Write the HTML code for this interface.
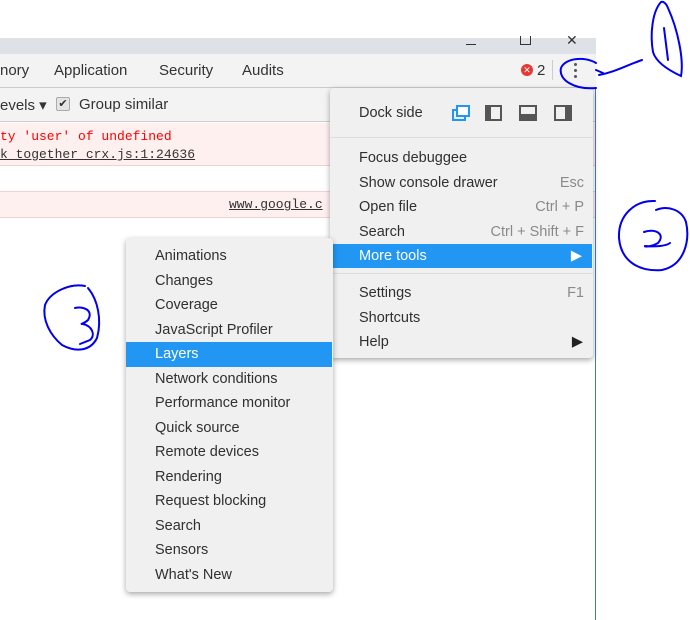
<!DOCTYPE html>
<html><head><style>
body{margin:0;width:690px;height:620px;background:#fff;position:relative;overflow:hidden;font-family:"Liberation Sans",sans-serif;font-size:14.5px;color:#303030}
.abs{position:absolute}
.menu{position:absolute;background:#f0f0f0;border-radius:4px;box-shadow:0 2px 6px rgba(0,0,0,.35)}
.it{position:absolute;left:0;right:0;height:24px;line-height:24px}
.it span.l{position:absolute}
.it span.r{position:absolute;color:#8a8a8a}
.hl{background:#2196f3;color:#fff}
.mono{font-family:"Liberation Mono",monospace;font-size:13px}
.tab{font-size:15px;color:#333}
</style></head><body>
<div class="abs" style="left:0;top:38px;width:596px;height:16px;background:#dee1e6"></div>
<div class="abs" style="left:466px;top:44px;width:10px;height:1px;background:#333"></div>
<div class="abs" style="left:520px;top:36px;width:9px;height:8px;border:1px solid #333;border-top:none"></div>
<div class="abs" style="left:566px;top:32px;font-size:14px;color:#333">✕</div>
<div class="abs" style="left:0;top:54px;width:596px;height:33px;background:#f3f3f3;border-bottom:1px solid #ccc"></div>
<div class="abs tab" style="left:0;top:62px">nory</div>
<div class="abs tab" style="left:54px;top:62px">Application</div>
<div class="abs tab" style="left:159px;top:62px">Security</div>
<div class="abs tab" style="left:242px;top:62px">Audits</div>
<div class="abs" style="left:521px;top:64px;width:12px;height:12px;border-radius:50%;background:#e53935;color:#fff;font-size:9px;line-height:12px;text-align:center">✕</div>
<div class="abs tab" style="left:537px;top:62px">2</div>
<div class="abs" style="left:552px;top:60px;width:1px;height:20px;background:#ccc"></div>
<div class="abs" style="left:574px;top:63px;width:3px;height:3px;border-radius:50%;background:#555;box-shadow:0 6px 0 #555,0 12px 0 #555"></div>
<div class="abs" style="left:0;top:88px;width:596px;height:33px;background:#f3f3f3;border-bottom:1px solid #ccc"></div>
<div class="abs tab" style="left:0;top:96px">evels ▾</div>
<div class="abs" style="left:56px;top:97px;width:12px;height:12px;border:1px solid #aaa;border-radius:2px;background:#e4e4e4;font-size:11px;line-height:12px;text-align:center">✔</div>
<div class="abs tab" style="left:79px;top:96px">Group similar</div>
<div class="abs" style="left:0;top:123px;width:596px;height:42px;background:#fff0f0;border-bottom:1px solid #f5d0d0"></div>
<div class="abs mono" style="left:0;top:129px;color:#f00">ty 'user' of undefined</div>
<div class="abs mono" style="left:0;top:147px;color:#333;text-decoration:underline">k_together_crx.js:1:24636</div>
<div class="abs" style="left:0;top:191px;width:596px;height:25px;background:#fff0f0;border-top:1px solid #f5d0d0;border-bottom:1px solid #f5d0d0"></div>
<div class="abs mono" style="left:229px;top:197px;color:#333;text-decoration:underline">www.google.c</div>
<div class="abs" style="left:595px;top:88px;width:1px;height:532px;background:#4a7bb7"></div>

<div class="menu" style="left:330px;top:88px;width:263px;height:270px">
 <div class="it" style="top:13px"><span class="l" style="left:29px">Dock side</span></div>
 <svg class="abs" style="left:120px;top:16px" width="130" height="20">
  <rect x="3" y="6" width="12" height="10" fill="none" stroke="#2196f3" stroke-width="2"/><rect x="7" y="2" width="12" height="10" fill="#fff" stroke="#2196f3" stroke-width="2"/>
  <rect x="36" y="2" width="15" height="14" fill="none" stroke="#555" stroke-width="2"/><rect x="36" y="2" width="5" height="14" fill="#555"/>
  <rect x="70" y="2" width="16" height="14" fill="none" stroke="#555" stroke-width="2"/><rect x="70" y="10" width="16" height="6" fill="#555"/>
  <rect x="105" y="2" width="16" height="14" fill="none" stroke="#555" stroke-width="2"/><rect x="115" y="2" width="6" height="14" fill="#555"/>
 </svg>
 <div class="abs" style="left:0;right:0;top:49px;height:1px;background:#ddd"></div>
 <div class="it" style="top:58px"><span class="l" style="left:29px">Focus debuggee</span></div>
 <div class="it" style="top:83px"><span class="l" style="left:29px">Show console drawer</span><span class="r" style="right:9px">Esc</span></div>
 <div class="it" style="top:107px"><span class="l" style="left:29px">Open file</span><span class="r" style="right:9px">Ctrl + P</span></div>
 <div class="it" style="top:132px"><span class="l" style="left:29px">Search</span><span class="r" style="right:9px">Ctrl + Shift + F</span></div>
 <div class="it hl" style="top:156px;right:1px"><span class="l" style="left:29px">More tools</span><span class="r" style="right:10px;color:#fff">▶</span></div>
 <div class="abs" style="left:0;right:0;top:185px;height:1px;background:#ddd"></div>
 <div class="it" style="top:193px"><span class="l" style="left:29px">Settings</span><span class="r" style="right:9px">F1</span></div>
 <div class="it" style="top:218px"><span class="l" style="left:29px">Shortcuts</span></div>
 <div class="it" style="top:242px"><span class="l" style="left:29px">Help</span><span class="r" style="right:10px;color:#222">▶</span></div>
</div>

<div class="menu" style="left:126px;top:238px;width:207px;height:354px">
 <div class="it" style="top:6px"><span class="l" style="left:29px">Animations</span></div>
 <div class="it" style="top:31px"><span class="l" style="left:29px">Changes</span></div>
 <div class="it" style="top:55px"><span class="l" style="left:29px">Coverage</span></div>
 <div class="it" style="top:80px"><span class="l" style="left:29px">JavaScript Profiler</span></div>
 <div class="it hl" style="top:104px;height:25px;right:1px"><span class="l" style="left:29px">Layers</span></div>
 <div class="it" style="top:129px"><span class="l" style="left:29px">Network conditions</span></div>
 <div class="it" style="top:153px"><span class="l" style="left:29px">Performance monitor</span></div>
 <div class="it" style="top:178px"><span class="l" style="left:29px">Quick source</span></div>
 <div class="it" style="top:202px"><span class="l" style="left:29px">Remote devices</span></div>
 <div class="it" style="top:227px"><span class="l" style="left:29px">Rendering</span></div>
 <div class="it" style="top:251px"><span class="l" style="left:29px">Request blocking</span></div>
 <div class="it" style="top:276px"><span class="l" style="left:29px">Search</span></div>
 <div class="it" style="top:300px"><span class="l" style="left:29px">Sensors</span></div>
 <div class="it" style="top:325px"><span class="l" style="left:29px">What's New</span></div>
</div>

<svg class="abs" style="left:0;top:0" width="690" height="620" fill="none" stroke="#0000ee" stroke-width="2" stroke-linecap="round">
 <path d="M596 63 C585 56 565 58 561 68 C558 80 575 90 596 88 M596 70 L603 73 M599 75 C615 72 625 66 642 60"/>
 <path d="M661 2 C652 12 650 35 653 52 C656 62 668 70 681 76 C684 60 678 30 668 8 C666 3 663 1 661 2 Z M664 28 L668 60"/>
 <path d="M655 201 C635 200 618 215 619 238 C621 262 640 272 662 270 C685 265 690 240 686 222 C682 210 668 205 656 210 M644 232 C655 228 666 234 658 243 C651 247 644 247 645 246 C656 247 666 246 670 243"/>
 <path d="M85 286 C70 283 50 292 45 305 C42 320 50 335 62 345 C75 352 90 352 97 338 C102 320 98 300 88 288 M75 308 C83 306 94 310 88 320 C84 324 79 324 83 324 C92 326 96 335 90 340 L80 344"/>
</svg>
</body></html>
